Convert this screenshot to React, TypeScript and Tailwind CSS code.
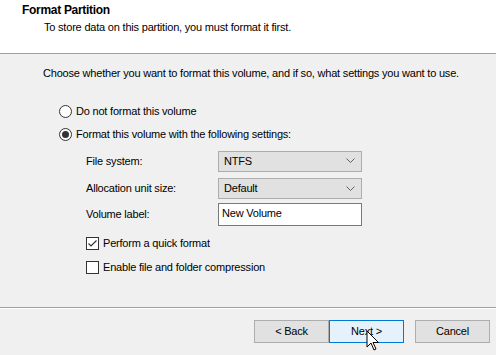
import React from 'react';

const Radio: React.FC<{ checked?: boolean; label: string }> = ({ checked, label }) => (
  <div className="flex items-center h-[23px]">
    <div className="w-[13px] h-[13px] rounded-full border border-[#333] bg-white flex items-center justify-center">
      {checked && <div className="w-[7px] h-[7px] rounded-full bg-[#333]" />}
    </div>
    <span className="ml-[4px]">{label}</span>
  </div>
);

const Check: React.FC<{ checked?: boolean; label: string }> = ({ checked, label }) => (
  <div className="flex items-center h-[24px]">
    <div className="w-[13px] h-[13px] border border-[#333] bg-white flex items-center justify-center">
      {checked && (
        <svg width="11" height="11" viewBox="0 0 11 11">
          <path d="M1.5 5.5 L4 8 L9.5 2.5" fill="none" stroke="#333" strokeWidth="1.2" />
        </svg>
      )}
    </div>
    <span className="ml-[4px]">{label}</span>
  </div>
);

const Combo: React.FC<{ value: string }> = ({ value }) => (
  <div className="w-[144px] h-[21px] bg-[#e1e1e1] border border-[#adadad] flex items-center justify-between pl-[5px] pr-[6px]">
    <span>{value}</span>
    <svg width="9" height="6" viewBox="0 0 9 6">
      <path d="M0.5 0.5 L4.5 4.5 L8.5 0.5" fill="none" stroke="#606060" strokeWidth="1" />
    </svg>
  </div>
);

const Button: React.FC<{ label: string; active?: boolean }> = ({ label, active }) => (
  <div
    className={
      active
        ? 'w-[75px] h-[23px] bg-[#e5f1fb] border border-[#0078d7] flex items-center justify-center'
        : 'w-[75px] h-[23px] bg-[#e1e1e1] border border-[#adadad] flex items-center justify-center'
    }
  >
    {label}
  </div>
);

export default function App() {
  return (
    <div
      className="relative w-[496px] h-[355px] bg-[#f0f0f0] overflow-hidden text-[11px] leading-[13px] tracking-[-0.2px] text-black"
      style={{ fontFamily: '"Liberation Sans", Arial, sans-serif' }}
    >
      {/* header */}
      <div className="h-[54px] bg-white border-b border-[#a0a0a0] pl-[22px] pt-[3px]">
        <div className="font-bold text-[12px] leading-[14px] tracking-[-0.3px]">Format Partition</div>
        <div className="pl-[22px] mt-[4px]">To store data on this partition, you must format it first.</div>
      </div>

      {/* body */}
      <div className="pl-[43px] pt-[13px]">
        <div>Choose whether you want to format this volume, and if so, what settings you want to use.</div>
        <div className="pl-[16px] mt-[20px]">
          <Radio label="Do not format this volume" />
          <Radio checked label="Format this volume with the following settings:" />
          <div className="pl-[27px] mt-[1px]">
            <div className="flex items-center h-[28px]">
              <span className="w-[132px]">File system:</span>
              <Combo value="NTFS" />
            </div>
            <div className="flex items-center h-[27px]">
              <span className="w-[132px]">Allocation unit size:</span>
              <Combo value="Default" />
            </div>
            <div className="flex items-center h-[24px]">
              <span className="w-[132px]">Volume label:</span>
              <div className="w-[144px] h-[23px] bg-white border border-[#7a7a7a] pl-[3px] pt-[3px]">New Volume</div>
            </div>
            <div className="mt-[5px]">
              <Check checked label="Perform a quick format" />
              <Check label="Enable file and folder compression" />
            </div>
          </div>
        </div>
      </div>

      {/* footer */}
      <div className="absolute left-0 right-0 top-[307px] border-t border-[#a0a0a0] border-b border-b-white" />
      <div className="absolute left-[254px] top-[320px] flex">
        <Button label="< Back" />
        <Button active label="Next >" />
        <div className="ml-[11px]">
          <Button label="Cancel" />
        </div>
      </div>

      {/* cursor */}
      <svg className="absolute left-[366px] top-[330px]" width="14" height="22" viewBox="0 0 14 22">
        <path
          d="M1 1 L1 17 L5 13 L8 20 L10 19 L7 12.5 L12.5 12.5 Z"
          fill="white"
          stroke="black"
          strokeWidth="1"
        />
      </svg>
    </div>
  );
}
